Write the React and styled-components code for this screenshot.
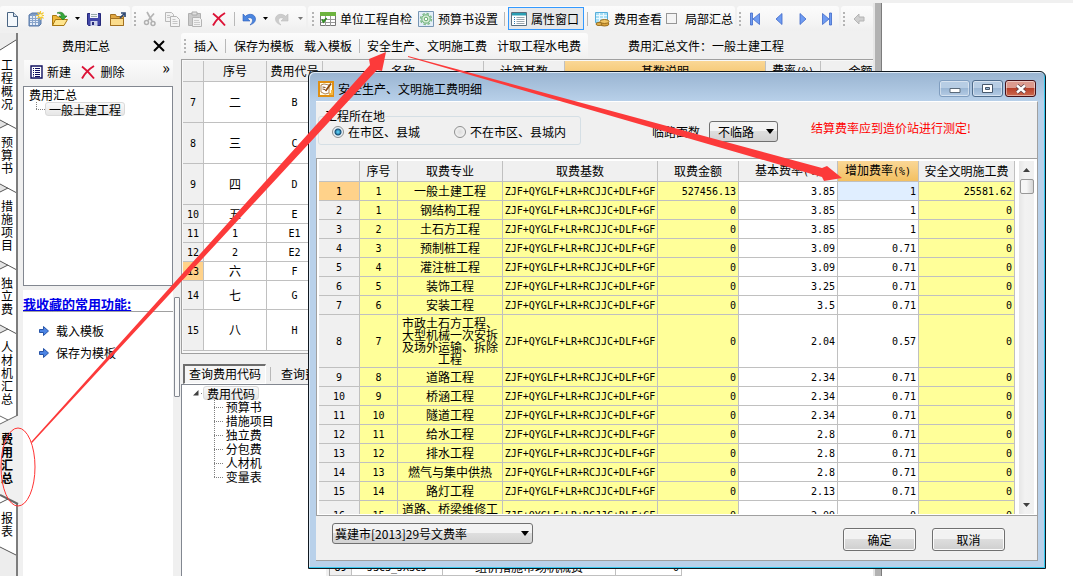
import React from "react";
import styled, { createGlobalStyle, css } from "styled-components";

const GlobalStyle = createGlobalStyle`
  * { box-sizing: border-box; }
  html, body { margin: 0; height: 100%; background: #f0f0f0; }
  body, button, select, input {
    font-family: "Noto Sans CJK SC", "Liberation Sans", sans-serif;
    font-size: 12px;
    line-height: 14px;
    color: #000;
  }
  button { padding: 0; border: 0; background: none; white-space: nowrap; }
  svg { display: block; flex: none; }
`;

/* ---------- shell ---------- */
const Screen = styled.div`
  position: relative;
  display: grid;
  grid-template-columns: minmax(0, 1fr) 9px 191px;
  height: 100vh;
  overflow: hidden;
`;
const AppWindow = styled.div`
  display: flex;
  flex-direction: column;
  min-width: 0;
  min-height: 0;
  padding-top: 6px;
`;
const WindowEdge = styled.div`
  margin-top: 3px;
  background: #b2b2b2;
  border-left: 2px solid #e6e6e6;
  border-right: 1px solid #7c7c7c;
`;
const Desktop = styled.div`
  margin-top: 3px;
  background: #fff;
`;
const Body = styled.div`
  display: grid;
  grid-template-columns: 18px 163px minmax(0, 1fr);
  flex: 1;
  min-height: 0;
  margin-top: 2px;
`;

/* ---------- toolbars ---------- */
const Bars = styled.div`
  display: flex;
  gap: 2px;
  height: 25px;
  overflow: hidden;
`;
const Bar = styled.div`
  display: flex;
  align-items: center;
  flex: ${(p) => (p.$grow ? "1 0 auto" : "none")};
  height: ${(p) => (p.$tall ? 27 : 25)}px;
  padding: 0 ${(p) => p.$end || 0}px 0 ${(p) => p.$start || 0}px;
  background: linear-gradient(#fcfcfc, #f4f4f4 70%, #efefef);
  border-radius: 3px;
`;
const IconButton = styled.button`
  display: flex;
  align-items: center;
  justify-content: center;
  flex: none;
  width: ${(p) => p.$w || 24}px;
  height: 22px;
`;
const TextButton = styled.button`
  display: flex;
  align-items: center;
  gap: 4px;
  flex: none;
  height: 22px;
  padding: 0 ${(p) => (p.$pad === undefined ? 4 : p.$pad)}px;
  ${(p) =>
    p.$active &&
    css`
      height: 23px;
      padding: 0 4px 0 2px;
      border: 1px solid #3399ff;
      background: #e6e8ea;
    `}
`;
const Divider = styled.span`
  flex: none;
  width: 1px;
  height: 14px;
  margin: 0 ${(p) => p.$m || 4}px;
  background: #b8b8b8;
`;
const Grip = styled.span`
  flex: none;
  width: 2px;
  height: 14px;
  margin: 0 ${(p) => p.$m || 6}px 0 2px;
  background: repeating-linear-gradient(#b4b4b4 0 2px, transparent 2px 4px);
`;
const CheckLabel = styled.label`
  display: flex;
  align-items: center;
  gap: 8px;
  margin-left: 1px;
`;
const CheckBox = styled.input`
  appearance: none;
  width: 11px;
  height: 11px;
  margin: 0;
  border: 1px solid #969696;
  background: #f4f4f4;
`;
const Caption = styled.span`
  margin-left: 40px;
  white-space: nowrap;
`;

/* ---------- side tabs ---------- */
const SideTabs = styled.nav`
  border-right: 2px solid #7d7d7d;
  background: #fff;
  display: flex;
  flex-direction: column;
  position: relative;
  z-index: 1;
`;
const SideTab = styled.button`
  flex: none;
  width: ${(p) => (p.$active ? 22 : 16)}px;
  padding: 0 ${(p) => (p.$active ? 8 : 1)}px 0 1px;
  text-align: left;
  white-space: normal;
  word-break: break-all;
  line-height: 13px;
  font-weight: ${(p) => (p.$active ? 700 : 400)};
  background: ${(p) => (p.$active ? "#f0f0f0" : "transparent")};
`;
const TabRest = styled.div`
  flex: 1;
  background: #ededed;
`;

/* ---------- side panel ---------- */
const Side = styled.aside`
  display: flex;
  flex-direction: column;
  min-height: 0;
  padding-left: 5px;
`;
const SideHead = styled.div`
  display: flex;
  align-items: center;
  height: 25px;
  padding: 0 16px 0 39px;
  justify-content: space-between;
`;
const SideTools = styled.div`
  display: flex;
  align-items: center;
  height: 24px;
  margin: 2px 8px 2px 1px;
  padding: 0 3px 0 6px;
  background: linear-gradient(#fcfcfc, #f0f0f0);
`;
const Chevron = styled.button`
  margin: -10px 0 0 auto;
  font-size: 16px;
`;
const SideTree = styled.div`
  flex: none;
  height: 200px;
  width: 150px;
  padding: 1px 5px;
  border: 1px solid #828790;
  background: #fff;
`;
const TreeRow = styled.div`
  display: flex;
  align-items: center;
  height: 14px;
  padding-left: ${(p) => p.$indent || 0}px;
  white-space: nowrap;
`;
const TreeSel = styled.span`
  display: block;
  height: 14px;
  line-height: 13px;
  padding: 0 3px;
  border: 1px solid #dadada;
  border-radius: 3px;
  background: linear-gradient(#fafafa, #e6e6e6);
`;
const SideLower = styled.div`
  display: grid;
  grid-template-columns: minmax(0, 1fr) 8px;
  flex: 1;
  min-height: 0;
  margin-top: 4px;
`;
const Favorites = styled.div`
  background: #fff;
  padding-top: 7px;
`;
const FavTitle = styled.h2`
  margin: 0 0 8px;
  height: 15px;
  border-bottom: 1px solid #a0a0a0;
  font-size: 13px;
  line-height: 14px;
  font-weight: 700;
  color: #0000e8;
  text-decoration: underline;
  white-space: nowrap;
`;
const FavLink = styled.a`
  display: flex;
  align-items: center;
  gap: 7px;
  height: 22px;
  padding-left: 16px;
  color: #000;
  text-decoration: none;
`;
const SplitHandle = styled.div`
  width: 6px;
  height: 100px;
  margin: 7px 1px;
  border: 1px solid #828790;
  border-radius: 1px;
  background: #f8f8f8;
`;

/* ---------- main area ---------- */
const Main = styled.main`
  display: flex;
  flex-direction: column;
  min-width: 0;
  min-height: 0;
`;
const MainTools = styled.div`
  display: flex;
  align-items: center;
  height: 26px;
`;
const TableFrame = styled.div`
  flex: none;
  overflow: hidden;
  border: 1px solid #a0a0a0;
  border-right: 0;
  padding: 1px 0 2px 1px;
  background: #f8f8f8;
`;
const Table = styled.table`
  width: ${(p) => p.$w || "100%"};
  table-layout: fixed;
  border-collapse: separate;
  border-spacing: 0;
  background: #fff;
`;
const cell = css`
  height: ${(p) => p.$h || 19}px;
  padding: 0 4px;
  border: 0 solid #c0c0c0;
  border-width: 0 1px 1px 0;
  font-weight: 400;
  line-height: 12px;
  overflow: hidden;
`;
const Th = styled.th`
  ${cell}
  padding: 0;
  white-space: nowrap;
  text-align: center;
  background: ${(p) => (p.$hot ? "linear-gradient(#fad796, #f3c062)" : p.$mark ? "#ffd28a" : "#f0f0f0")};
`;
const Td = styled.td`
  ${cell}
  padding: 0 ${(p) => (p.$right ? 2 : p.$mono ? 1 : 4)}px;
  text-align: ${(p) => (p.$right ? "right" : "center")};
  background: ${(p) => (p.$sel ? "#e0eeff" : p.$lock ? "#ffff99" : "#fff")};
`;
const Mono = styled.span`
  font-family: "DejaVu Sans Mono", "Liberation Mono", monospace;
  font-size: 10px;
  line-height: 12px;
`;
const QueryTabs = styled.div`
  display: flex;
  align-items: center;
  flex: none;
  height: 21px;
  margin: 9px 0 0 2px;
`;
const QueryTab = styled.button`
  height: 20px;
  padding: 0 ${(p) => (p.$active ? 4 : 6)}px;
  ${(p) =>
    p.$active &&
    css`
      border: 1px solid #fff;
      border-top: 2px solid #6e6e6e;
      border-left: 2px solid #6e6e6e;
      background: #f6f6f6;
    `}
`;
const Lower = styled.div`
  display: grid;
  grid-template-columns: 144px 4px minmax(0, 1fr);
  flex: 1;
  min-height: 0;
  border: 1px solid #828790;
  border-width: 1px 0 0 1px;
`;
const CodeTree = styled.div`
  padding: 1px 0 0 11px;
  background: #fff;
`;
const Splitter = styled.div`
  border-right: 1px solid #a0a0a0;
`;
const CodeTable = styled.div`
  display: flex;
  flex-direction: column;
  justify-content: flex-end;
  overflow: hidden;
  background: #fff;
`;

/* ---------- dialog ---------- */
const Dialog = styled.section`
  position: absolute;
  left: 308px;
  right: 27px;
  top: 71px;
  z-index: 2;
  padding: 0 7px;
  border: 1px solid #101820;
  border-radius: 6px 6px 0 0;
  padding-bottom: 7px;
  box-shadow: inset -1px -1px 0 #35c8ee, inset 1px 1px 0 #dce9f6;
  background: linear-gradient(#99b4d1, #b9d1ea 30px);
`;
const TitleBar = styled.header`
  display: flex;
  align-items: center;
  height: 29px;
  padding: 5px 2px 0 2px;
`;
const Title = styled.h1`
  flex: 1;
  margin: 0 0 0 4px;
  font-size: 12px;
  line-height: 16px;
  font-weight: 400;
`;
const WinButton = styled.button`
  display: flex;
  align-items: center;
  justify-content: center;
  width: 31px;
  height: 17px;
  margin: -1px 0 0 2px;
  border: 1px solid ${(p) => (p.$close ? "#451018" : p.$dim ? "#7f9dbf" : "#4f6c8c")};
  border-radius: 3px;
  box-shadow: inset 0 0 0 1px rgba(255, 255, 255, 0.45);
  background: ${(p) =>
    p.$close
      ? "linear-gradient(#dc9a8e 0 45%, #b8402a 50%, #cc6a50)"
      : "linear-gradient(#b7cde4 0 45%, #9bb7d5 50%, #b4cbe4)"};
`;
const Content = styled.div`
  background: #f0f0f0;
  border: 1px solid #a0a0a0;
  border-width: 1px 1px 1px 0;
  border-top-color: #fff;
`;
const Options = styled.div`
  display: flex;
  align-items: flex-start;
  height: 56px;
  padding: 7px 0 0 2px;
`;
const Group = styled.fieldset`
  display: flex;
  flex: none;
  align-items: center;
  gap: 34px;
  width: 263px;
  height: 36px;
  margin: 0;
  padding: 0 0 0 13px;
  border: 1px solid #d5dfe5;
  border-radius: 3px;
`;
const Legend = styled.legend`
  margin-left: -7px;
  padding: 0;
  line-height: 14px;
`;
const RadioLabel = styled.label`
  display: flex;
  align-items: center;
  gap: 4px;
  margin-top: -4px;
  white-space: nowrap;
`;
const Radio = styled.input`
  appearance: none;
  width: 12px;
  height: 12px;
  margin: 0;
  border: 1px solid #8e8f8f;
  border-radius: 50%;
  background: radial-gradient(#dcdcdc, #fafafa);
  &:checked {
    background: radial-gradient(circle, #54c4ec 0 1px, #124a72 3px, #e8f2f8 4px);
  }
`;
const RoadLabel = styled.label`
  margin: 16px 9px 0 71px;
  white-space: nowrap;
`;
const SelectBox = styled.div`
  position: relative;
  flex: none;
  width: ${(p) => p.$w}px;
  margin-top: ${(p) => p.$top || 0}px;
  > svg {
    position: absolute;
    right: 4px;
    top: 8px;
    pointer-events: none;
  }
`;
const Select = styled.select`
  display: block;
  appearance: none;
  width: 100%;
  height: 21px;
  padding: 0 ${(p) => p.$pad || 2}px;
  border: 1px solid #707070;
  border-radius: 3px;
  background: linear-gradient(#f3f3f3 0 45%, #dedede 50%, #d2d2d2);
`;
const Notice = styled.p`
  margin: 12px 0 0 33px;
  color: #f00;
  white-space: nowrap;
`;
const GridFrame = styled.div`
  display: flex;
  gap: 4px;
  height: 358px;
  padding: 2px 3px 1px 2px;
  border: 1px solid #a0a0a0;
  border-width: 1px 0 1px 1px;
  background: #fff;
`;
const GridView = styled.div`
  flex: 1;
  min-width: 0;
  overflow: hidden;
`;
const ScrollBar = styled.div`
  display: flex;
  flex-direction: column;
  align-items: center;
  width: 15px;
  background: linear-gradient(90deg, #e6e6e6, #f2f2f2 40%, #f0f0f0);
`;
const ScrollArrow = styled.button`
  display: flex;
  align-items: center;
  justify-content: center;
  width: 15px;
  height: 18px;
`;
const Thumb = styled.div`
  width: 14px;
  height: 15px;
  margin-bottom: auto;
  border: 1px solid #989898;
  border-radius: 2px;
  background: linear-gradient(90deg, #f6f6f6 0 45%, #d4d4d4);
`;
const Footer = styled.footer`
  display: flex;
  align-items: flex-start;
  height: 44px;
  padding: 7px 32px 0 16px;
`;
const PushButton = styled.button`
  width: 73px;
  height: 23px;
  margin: 5px 0 0 16px;
  border: 1px solid #707070;
  border-radius: 3px;
  box-shadow: inset 0 0 0 1px #fbfbfb;
  background: linear-gradient(#f2f2f2 0 48%, #dddddd 50%, #cfcfcf);
`;
const Spacer = styled.div`
  flex: 1;
`;
const Annotation = styled.svg`
  position: absolute;
  left: 0;
  top: 0;
  z-index: 3;
  pointer-events: none;
`;

/* ---------- icons ---------- */
const Svg = ({ w = 16, h = 16, children }) => (
  <svg width={w} height={h} viewBox={`0 0 ${w} ${h}`} fill="none" aria-hidden="true">
    {children}
  </svg>
);
const NewIcon = () => (
  <Svg>
    <path d="M3.5 1.5h6l4 4v10h-10z" fill="#f4f8fc" stroke="#4a6583" />
    <path d="M9.500 1.500v4h4" fill="#cfdcea" stroke="#4a6583" />
  </Svg>
);
const NotesIcon = () => (
  <Svg>
    <path d="M1 4l3-2h9v11l-2 2H1z" fill="#7d9cc6" stroke="#5878a8" />
    <path d="M2 5h8v9H2z" fill="#e7eef8" />
    <path d="M2 7.500h8M2 9.500h8M2 11.500h8M4.500 4v10M7.500 4v10" stroke="#8aa5cb" />
    <path d="M12.500 0v9M8 4.500h8M9.500 1.500l6 6M15.500 1.500l-6 6" stroke="#f5c935" strokeWidth="1.200" />
    <circle cx="12.500" cy="4.500" r="1.600" fill="#fff6b8" />
  </Svg>
);
const OpenIcon = () => (
  <Svg w={18}>
    <path d="M1.500 14.500v-10h4l1 1.500h6v8z" fill="#f0b93a" stroke="#a87812" />
    <path d="M1.500 14.500l3-6h12l-3.500 6z" fill="#ffe58e" stroke="#a87812" />
    <path d="M6 2c4-2 7 0 7.500 3h2.500l-4 4-4-4h2.500c-.5-2-2-3-4.500-3z" fill="#36a83a" stroke="#187020" strokeWidth=".6" />
  </Svg>
);
const SaveIcon = () => (
  <Svg>
    <path d="M1.500 2.500h13v12h-12l-1-1z" fill="#4247a8" stroke="#26297a" />
    <path d="M4 2h8v5H4z" fill="#f2f4fb" />
    <path d="M5 3.500h6M5 5.500h6" stroke="#9aa" />
    <path d="M4.500 10h7v5h-7z" fill="#cdd3ea" />
    <path d="M6 11h2v3H6z" fill="#26297a" />
  </Svg>
);
const FolderIcon = () => (
  <Svg w={18}>
    <path d="M1.500 14.500v-11h5l1 2h7v9z" fill="#e0a640" stroke="#a27020" />
    <path d="M1.500 14.500v-7h13v7z" fill="#fbdc8c" stroke="#a27020" />
    <path d="M11 7l4-4M12 2h4v4" stroke="#2d4770" strokeWidth="1.700" />
  </Svg>
);
const CutIcon = () => (
  <Svg>
    <path d="M5 1l5 9M12 2.500l-6 7" stroke="#b4b4b4" strokeWidth="1.700" />
    <circle cx="4.500" cy="11.500" r="2" stroke="#b0b0b0" strokeWidth="1.500" />
    <circle cx="11" cy="12.500" r="2" stroke="#b0b0b0" strokeWidth="1.500" />
  </Svg>
);
const CopyIcon = () => (
  <Svg>
    <path d="M1.500 1.500h6l2 2v7h-8z" fill="#f2f2f2" stroke="#b8b8b8" />
    <path d="M6.500 5.500h6l3 3v7h-9z" fill="#f4f4f4" stroke="#b4b4b4" />
    <path d="M3 4.500h3M3 6.500h3M8.500 8.500h3M8.500 10.500h5M8.500 12.500h5" stroke="#c6c6c6" />
  </Svg>
);
const PasteIcon = () => (
  <Svg>
    <path d="M1.500 2.500h12v12h-12z" fill="#cacaca" stroke="#b0b0b0" />
    <path d="M5 1h5v3H5z" fill="#e2e2e2" stroke="#aaa" />
    <path d="M5.500 6.500h7l2 2v7h-9z" fill="#f2f2f2" stroke="#b4b4b4" />
    <path d="M7 9.500h5M7 11.500h6M7 13.500h6" stroke="#ccc" />
  </Svg>
);
const CrossIcon = () => (
  <Svg>
    <path d="M2 2.500c4 3 8 7 12 12M14 2C9 5 5 9 2 14.500" stroke="#dc1236" strokeWidth="1.900" />
  </Svg>
);
const TurnIcon = ({ redo }) => (
  <Svg>
    <g transform={redo ? "translate(16 0) scale(-1 1)" : undefined}>
      <path d="M2 3v7h7L6.500 7.600c2-1.600 5-.8 5 1.800 0 1.800-1 3-2.500 4.600 4-1.500 5.500-3.500 5.500-6C14.500 3.500 8.500 1.500 4.400 5.300z" fill={redo ? "#cccccc" : "#4b86e0"} stroke={redo ? "#bdbdbd" : "#2c5cb8"} strokeWidth=".6" />
    </g>
  </Svg>
);
const Caret = ({ dim }) => (
  <Svg w={5} h={3}>
    <path d="M0 0h5L2.500 3z" fill={dim ? "#777" : "#000"} />
  </Svg>
);
const CheckTableIcon = () => (
  <Svg>
    <path d="M.5 1.500h15v13H.5z" fill="#fff" stroke="#777" />
    <path d="M0 1h16v4H0z" fill="#6db33f" />
    <path d="M1 8.500h14M1 11.500h14M5.500 5v10M10.500 5v10" stroke="#999" />
    <path d="M2 8.500l1.500 2.500 3-4" stroke="#2f8c22" strokeWidth="1.800" />
  </Svg>
);
const GearIcon = () => (
  <Svg>
    <path d="M.5.5h15v15H.5z" fill="#e3eef8" stroke="#7896b4" />
    <circle cx="8" cy="8" r="5.500" stroke="#7dba86" strokeWidth="1.400" strokeDasharray="2.500 1.800" />
    <circle cx="8" cy="8" r="4.200" fill="#dcefdc" stroke="#62ab6c" />
    <circle cx="8" cy="8" r="1.800" fill="#fff" stroke="#62ab6c" />
  </Svg>
);
const PanelIcon = () => (
  <Svg>
    <path d="M.5 1.500h15v13H.5z" fill="#fff" stroke="#5b6e7d" />
    <path d="M1 2h14v2.500H1z" fill="#2a9fb4" />
    <path d="M3 6.500h1M3 8.500h1M3 10.500h1M3 12.500h1" stroke="#2a7ab4" />
    <path d="M5.500 6.500h8M5.500 8.500h8M5.500 10.500h8M5.500 12.500h8" stroke="#9aa6ae" />
  </Svg>
);
const CostIcon = () => (
  <Svg>
    <path d="M1.500 1.500h12v10h-12z" fill="#a9dff5" stroke="#56aedb" />
    <path d="M2 4.500h11M2 7.500h11M5.500 2v9M9.500 2v9" stroke="#eaf8fe" />
    <ellipse cx="10.500" cy="13" rx="4.500" ry="2" fill="#d9a23c" stroke="#9a6d1c" />
    <ellipse cx="10.500" cy="10.500" rx="4.500" ry="2" fill="#f0c566" stroke="#9a6d1c" />
    <ellipse cx="5" cy="13" rx="3" ry="1.500" fill="#e5b450" stroke="#9a6d1c" />
  </Svg>
);
const NavIcon = ({ back, end }) => (
  <Svg w={12} h={14}>
    <g transform={back ? "translate(12 0) scale(-1 1)" : undefined} stroke="#3f68c8" strokeWidth=".8">
      <path d={end ? "M1.500 1.500L8 7l-6.500 5.500z" : "M3 1.500L9 7l-6 5.500z"} fill="#6f9cf2" />
      {end && <path d="M8.500 1h2v12h-2z" fill="#6f9cf2" />}
    </g>
  </Svg>
);
const BackIcon = () => (
  <Svg w={12} h={12}>
    <path d="M1 6l5-5v3h5v4H6v3z" fill="#cfcfcf" stroke="#b4b4b4" />
  </Svg>
);
const ListIcon = () => (
  <Svg w={13} h={14}>
    <path d="M1 1h11v12H1z" fill="#fff" stroke="#101060" strokeWidth="1.400" />
    <path d="M3 3.500h1M3 5.500h1M3 7.500h1M3 9.500h1M3 11h1M5 3.500h5M5 5.500h5M5 7.500h5M5 9.500h5M5 11.500h5" stroke="#101060" />
  </Svg>
);
const CloseIcon = () => (
  <Svg w={12} h={12}>
    <path d="M1 1l10 10M11 1L1 11" stroke="#000" strokeWidth="2" />
  </Svg>
);
const GoIcon = () => (
  <Svg w={10} h={10}>
    <path d="M.5 3.500h4v-3L9.500 5l-5 4.500v-3h-4z" fill="#4c84e4" stroke="#2754a8" />
  </Svg>
);
const DialogIcon = () => (
  <Svg>
    <path d="M1 1h14v14H1z" fill="#fffbe6" stroke="#e08f12" strokeWidth="2" />
    <path d="M3 4l3-1 5 1v8l-4 1-4-2z" fill="#fff" stroke="#a0662a" strokeWidth=".8" />
    <path d="M4.500 6l3 .5M4.500 8l2.500.5" stroke="#7c4a18" />
    <path d="M13 2.500L7.500 10" stroke="#8c4b12" strokeWidth="1.800" />
    <path d="M11 13h3v-4" stroke="#f5b63c" strokeWidth="2" />
  </Svg>
);
const Branch = ({ last }) => (
  <Svg w={9} h={14}>
    <path d={last ? "M.5 0v7" : "M.5 0v14"} stroke="#808080" strokeDasharray="1 1" />
    <path d="M0 7.500h9" stroke="#808080" strokeDasharray="1 1" />
  </Svg>
);
const TabEdge = ({ kind }) => (
  <Svg w={kind === "before" || kind === "after" ? 22 : 16} h={kind === "before" || kind === "after" ? 27 : 25}>
    {kind === "first" && (
      <>
        <path d="M0 0h16v7L0 17z" fill="#ededed" />
        <path d="M0 17L16 7" stroke="#555" />
      </>
    )}
    {kind === "mid" && (
      <>
        <path d="M0 10v8l8-4z" fill="#e4e4e4" />
        <path d="M0 10l16 8.500M0 18l8-4" stroke="#555" />
      </>
    )}
    {kind === "before" && (
      <>
        <path d="M0 19L18 10h4v17H0z" fill="#f0f0f0" />
        <path d="M0 19L18 10M0 11l8 4" stroke="#666" />
      </>
    )}
    {kind === "after" && (
      <>
        <path d="M0 0h22v20h-4L0 11z" fill="#f0f0f0" />
        <path d="M0 11l18 9" stroke="#666" strokeWidth="2" />
        <path d="M0 19l8-4" stroke="#555" />
      </>
    )}
    {kind === "last" && (
      <>
        <path d="M0 10l16 8v7H0z" fill="#ededed" />
        <path d="M0 10l16 8" stroke="#555" />
      </>
    )}
  </Svg>
);

/* ---------- data ---------- */
const mix = (text) =>
  String(text)
    .split(/([\x21-\x7e]+)/)
    .filter(Boolean)
    .map((part, i) => (/^[\x21-\x7e]/.test(part) ? <Mono key={i}>{part}</Mono> : part));

const sideTabs = ["工程概况", "预算书", "措施项目", "独立费", "人材机汇总", "费用汇总", "报表"];
const edgeOf = (i) => (i === 0 ? "first" : sideTabs[i] === "费用汇总" ? "before" : sideTabs[i - 1] === "费用汇总" ? "after" : "mid");

const mainRows = [
  [7, "二", "B", 41],
  [8, "三", "C", 41],
  [9, "四", "D", 41],
  [10, "五", "E", 19],
  [11, "1", "E1", 19],
  [12, "2", "E2", 19],
  [13, "六", "F", 19],
  [14, "七", "G", 29],
  [15, "八", "H", 41],
];
const mainHeads = ["序号", "费用代号", "名称", "计算基数", "基数说明", "费率(%)", "金额"];
const mainCols = [21, 63, 56, 161, 81, 201, 55, 80];

const FORMULA = "ZJF+QYGLF+LR+RCJJC+DLF+GF";
const feeHeads = ["序号", "取费专业", "取费基数", "取费金额", "基本费率(%)", "增加费率(%)", "安全文明施工费"];
const feeCols = [41, 38, 105, 155, 81, 99, 81];
const feeRows = [
  ["1", "一般土建工程", "527456.13", "3.85", "1", "25581.62"],
  ["1", "钢结构工程", "0", "3.85", "1", "0"],
  ["2", "土石方工程", "0", "3.85", "1", "0"],
  ["3", "预制桩工程", "0", "3.09", "0.71", "0"],
  ["4", "灌注桩工程", "0", "3.09", "0.71", "0"],
  ["5", "装饰工程", "0", "3.25", "0.71", "0"],
  ["6", "安装工程", "0", "3.5", "0.71", "0"],
  ["7", "市政土石方工程、大型机械一次安拆及场外运输、拆除工程", "0", "2.04", "0.57", "0", 53],
  ["8", "道路工程", "0", "2.34", "0.71", "0"],
  ["9", "桥涵工程", "0", "2.34", "0.71", "0"],
  ["10", "隧道工程", "0", "2.34", "0.71", "0"],
  ["11", "给水工程", "0", "2.8", "0.71", "0"],
  ["12", "排水工程", "0", "2.8", "0.71", "0"],
  ["13", "燃气与集中供热", "0", "2.8", "0.71", "0"],
  ["14", "路灯工程", "0", "2.13", "0.71", "0"],
  ["15", "道路、桥梁维修工程", "0", "2.09", "0", "0", 29],
];

const codeItems = ["预算书", "措施项目", "独立费", "分包费", "人材机", "变量表"];

/* ---------- parts ---------- */
function TopBars() {
  return (
    <Bars>
      <Bar>
        <IconButton aria-label="新建文件"><NewIcon /></IconButton>
        <IconButton aria-label="新建工程"><NotesIcon /></IconButton>
        <IconButton aria-label="打开"><OpenIcon /></IconButton>
        <IconButton $w={10} aria-label="打开列表"><Caret /></IconButton>
        <IconButton aria-label="保存"><SaveIcon /></IconButton>
        <IconButton aria-label="导出"><FolderIcon /></IconButton>
      </Bar>
      <Bar>
        <Grip $m={3} />
        <IconButton $w={22} aria-label="剪切"><CutIcon /></IconButton>
        <IconButton $w={22} aria-label="复制"><CopyIcon /></IconButton>
        <IconButton aria-label="粘贴"><PasteIcon /></IconButton>
        <IconButton aria-label="删除"><CrossIcon /></IconButton>
        <Divider $m={3} />
        <IconButton $w={22} aria-label="撤销"><TurnIcon /></IconButton>
        <IconButton $w={10} aria-label="撤销列表"><Caret /></IconButton>
        <IconButton aria-label="重做"><TurnIcon redo /></IconButton>
        <IconButton $w={12} aria-label="重做列表"><Caret dim /></IconButton>
      </Bar>
      <Bar $end={2} $start={2}>
        <Grip $m={3} />
        <TextButton $pad={3}><CheckTableIcon />单位工程自检</TextButton>
        <TextButton $pad={3}><GearIcon />预算书设置</TextButton>
        <Divider $m={3} />
        <TextButton $active><PanelIcon />属性窗口</TextButton>
        <Divider $m={3} />
        <TextButton $pad={3}><CostIcon />费用查看</TextButton>
        <CheckLabel><CheckBox type="checkbox" />局部汇总</CheckLabel>
      </Bar>
      <Bar>
        <Grip $m={2} />
        <IconButton aria-label="首条"><NavIcon back end /></IconButton>
        <IconButton aria-label="上一条"><NavIcon back /></IconButton>
        <IconButton aria-label="下一条"><NavIcon /></IconButton>
        <IconButton aria-label="末条"><NavIcon end /></IconButton>
      </Bar>
      <Bar $grow>
        <Grip $m={2} />
        <IconButton aria-label="后退"><BackIcon /></IconButton>
      </Bar>
    </Bars>
  );
}

function SidePanel() {
  return (
    <Side>
      <SideHead>
        费用汇总
        <button aria-label="关闭"><CloseIcon /></button>
      </SideHead>
      <SideTools>
        <TextButton $pad={0}><ListIcon />新建</TextButton>
        <Spacer />
        <TextButton $pad={0}><CrossIcon />删除</TextButton>
        <Spacer />
        <Spacer />
        <Spacer />
        <Spacer />
        <Chevron aria-label="更多">»</Chevron>
      </SideTools>
      <SideTree>
        <TreeRow>费用汇总</TreeRow>
        <TreeRow $indent={7}>
          <Branch last />
          <TreeSel>一般土建工程</TreeSel>
        </TreeRow>
      </SideTree>
      <SideLower>
        <Favorites>
          <FavTitle>我收藏的常用功能:</FavTitle>
          <FavLink href="#load"><GoIcon />载入模板</FavLink>
          <FavLink href="#save"><GoIcon />保存为模板</FavLink>
        </Favorites>
        <SplitHandle />
      </SideLower>
    </Side>
  );
}

function MainPanel() {
  return (
    <Main>
      <MainTools>
        <Bar $tall $end={2} $start={1}>
          <Grip $m={4} />
          <TextButton>插入</TextButton>
          <Divider $m={3} />
          <TextButton $pad={5}>保存为模板</TextButton>
          <TextButton $pad={5}>载入模板</TextButton>
          <Divider $m={2} />
          <TextButton $pad={5}>安全生产、文明施工费</TextButton>
          <TextButton $pad={5}>计取工程水电费</TextButton>
        </Bar>
        <Caption>费用汇总文件：一般土建工程</Caption>
      </MainTools>
      <TableFrame>
        <Table $w="718px">
          <colgroup>{mainCols.map((w, i) => <col key={i} style={{ width: w }} />)}</colgroup>
          <thead>
            <tr>
              <Th $h={21} />
              {mainHeads.map((h) => <Th key={h} $h={21} $hot={h === "基数说明"}>{mix(h)}</Th>)}
            </tr>
          </thead>
          <tbody>
            {mainRows.map(([n, no, code, h]) => (
              <tr key={n}>
                <Th scope="row" $h={h} $mark={n === 13}>{mix(n)}</Th>
                <Td $h={h}>{mix(no)}</Td>
                <Td $h={h}>{mix(code)}</Td>
                <Td /><Td /><Td /><Td /><Td />
              </tr>
            ))}
          </tbody>
        </Table>
      </TableFrame>
      <QueryTabs>
        <QueryTab $active>查询费用代码</QueryTab>
        <Divider />
        <QueryTab>查询费率</QueryTab>
      </QueryTabs>
      <Lower>
        <CodeTree>
          <TreeRow>
            <Svg w={6} h={6}><path d="M5.500 0v5.500H0z" fill="#404040" /></Svg>
            <Svg w={4} h={14}><path d="M2 7.500h2" stroke="#808080" strokeDasharray="1 1" /></Svg>
            <TreeSel>费用代码</TreeSel>
          </TreeRow>
          {codeItems.map((name, i) => (
            <TreeRow key={name} $indent={21}>
              <Branch last={i === codeItems.length - 1} />
              &nbsp;{name}
            </TreeRow>
          ))}
        </CodeTree>
        <Splitter />
        <CodeTable>
          <Table $w="352px">
            <colgroup>
              <col style={{ width: 22 }} />
              <col style={{ width: 91 }} />
              <col style={{ width: 173 }} />
              <col />
            </colgroup>
            <tbody>
              <tr>
                <Th scope="row" $h={17}>{mix("89")}</Th>
                <Td $h={17}>{mix("JSCS_JXSCJ")}</Td>
                <Td $h={17}>组价措施市场机械费</Td>
                <Td $h={17} $right>{mix("0")}</Td>
              </tr>
            </tbody>
          </Table>
        </CodeTable>
      </Lower>
    </Main>
  );
}

const DropArrow = () => (
  <Svg w={8} h={5}>
    <path d="M0 0h8L4 5z" fill="#000" />
  </Svg>
);

function FeeDialog() {
  return (
    <Dialog role="dialog" aria-labelledby="fee-title">
      <TitleBar>
        <DialogIcon />
        <Title id="fee-title">安全生产、文明施工费明细</Title>
        <WinButton $dim aria-label="最小化">
          <Svg w={12} h={11}><path d="M1 5.500h10v4H1z" fill="#fff" stroke="#5a6a7a" /></Svg>
        </WinButton>
        <WinButton aria-label="最大化">
          <Svg w={11} h={9}>
            <path d="M.5.5h10v8H.5z" fill="#fff" stroke="#46586c" />
            <path d="M3.500 3.500h4v2h-4z" fill="#9bb7d5" stroke="#46586c" />
          </Svg>
        </WinButton>
        <WinButton $close aria-label="关闭">
          <Svg w={12} h={10}>
            <path d="M2 1.500l8 7M10 1.500l-8 7" stroke="#5c4048" strokeWidth="4" />
            <path d="M2 1.500l8 7M10 1.500l-8 7" stroke="#fff" strokeWidth="2.400" />
          </Svg>
        </WinButton>
      </TitleBar>
      <Content>
        <Options>
          <Group>
            <Legend>工程所在地</Legend>
            <RadioLabel><Radio type="radio" name="place" defaultChecked />在市区、县城</RadioLabel>
            <RadioLabel><Radio type="radio" name="place" />不在市区、县城内</RadioLabel>
          </Group>
          <RoadLabel htmlFor="road">临路面数</RoadLabel>
          <SelectBox $w={69} $top={12}>
            <Select id="road" $pad={8} defaultValue="不临路">
              <option>不临路</option>
            </Select>
            <DropArrow />
          </SelectBox>
          <Notice>结算费率应到造价站进行测定!</Notice>
        </Options>
        <GridFrame>
          <GridView>
            <Table>
              <colgroup>
                {feeCols.map((w, i) => <col key={i} style={{ width: w }} />)}
                <col />
              </colgroup>
              <thead>
                <tr>
                  <Th $h={21} />
                  {feeHeads.map((h) => <Th key={h} $h={21} $hot={h === "增加费率(%)"}>{mix(h)}</Th>)}
                </tr>
              </thead>
              <tbody>
                {feeRows.map(([no, name, amount, base, extra, total, h], i) => (
                  <tr key={i}>
                    <Th scope="row" $h={h} $mark={i === 0}>{mix(i + 1)}</Th>
                    <Td $lock $h={h}>{mix(no)}</Td>
                    <Td $lock $h={h}>{name}</Td>
                    <Td $lock $h={h} $mono>{mix(FORMULA)}</Td>
                    <Td $lock $h={h} $right>{mix(amount)}</Td>
                    <Td $h={h} $right>{mix(base)}</Td>
                    <Td $h={h} $right $sel={i === 0}>{mix(extra)}</Td>
                    <Td $lock $h={h} $right>{mix(total)}</Td>
                  </tr>
                ))}
              </tbody>
            </Table>
          </GridView>
          <ScrollBar>
            <ScrollArrow aria-label="向上滚动">
              <Svg w={7} h={4}><path d="M0 4h7L3.500 0z" fill="#404040" /></Svg>
            </ScrollArrow>
            <Thumb />
            <ScrollArrow aria-label="向下滚动">
              <Svg w={7} h={4}><path d="M0 0h7L3.500 4z" fill="#404040" /></Svg>
            </ScrollArrow>
          </ScrollBar>
        </GridFrame>
        <Footer>
          <SelectBox $w={201}>
            <Select aria-label="费率文件" defaultValue="冀建市[2013]29号文费率">
              <option>冀建市[2013]29号文费率</option>
            </Select>
            <DropArrow />
          </SelectBox>
          <Spacer />
          <PushButton>确定</PushButton>
          <PushButton>取消</PushButton>
        </Footer>
      </Content>
    </Dialog>
  );
}

export default function App() {
  return (
    <>
      <GlobalStyle />
      <Screen>
        <AppWindow>
          <TopBars />
          <Body>
            <SideTabs>
              {sideTabs.map((name, i) => (
                <React.Fragment key={name}>
                  <TabEdge kind={edgeOf(i)} />
                  <SideTab $active={name === "费用汇总"}>{name}</SideTab>
                </React.Fragment>
              ))}
              <TabEdge kind="last" />
              <TabRest />
            </SideTabs>
            <SidePanel />
            <MainPanel />
          </Body>
        </AppWindow>
        <WindowEdge />
        <Desktop />
        <FeeDialog />
        <Annotation width="860" height="520" viewBox="0 0 860 520" aria-hidden="true">
          <ellipse cx="18" cy="467" rx="17" ry="39" fill="none" stroke="#f33" />
          <path d="M31 442L370 65l-1-6 17-7-4 19-5-1L32 443z" fill="#fc3a3a" />
          <path d="M408 56L822 168l5-2 15 12-18 3-2-4L408 57z" fill="#fc3a3a" />
        </Annotation>
      </Screen>
    </>
  );
}
